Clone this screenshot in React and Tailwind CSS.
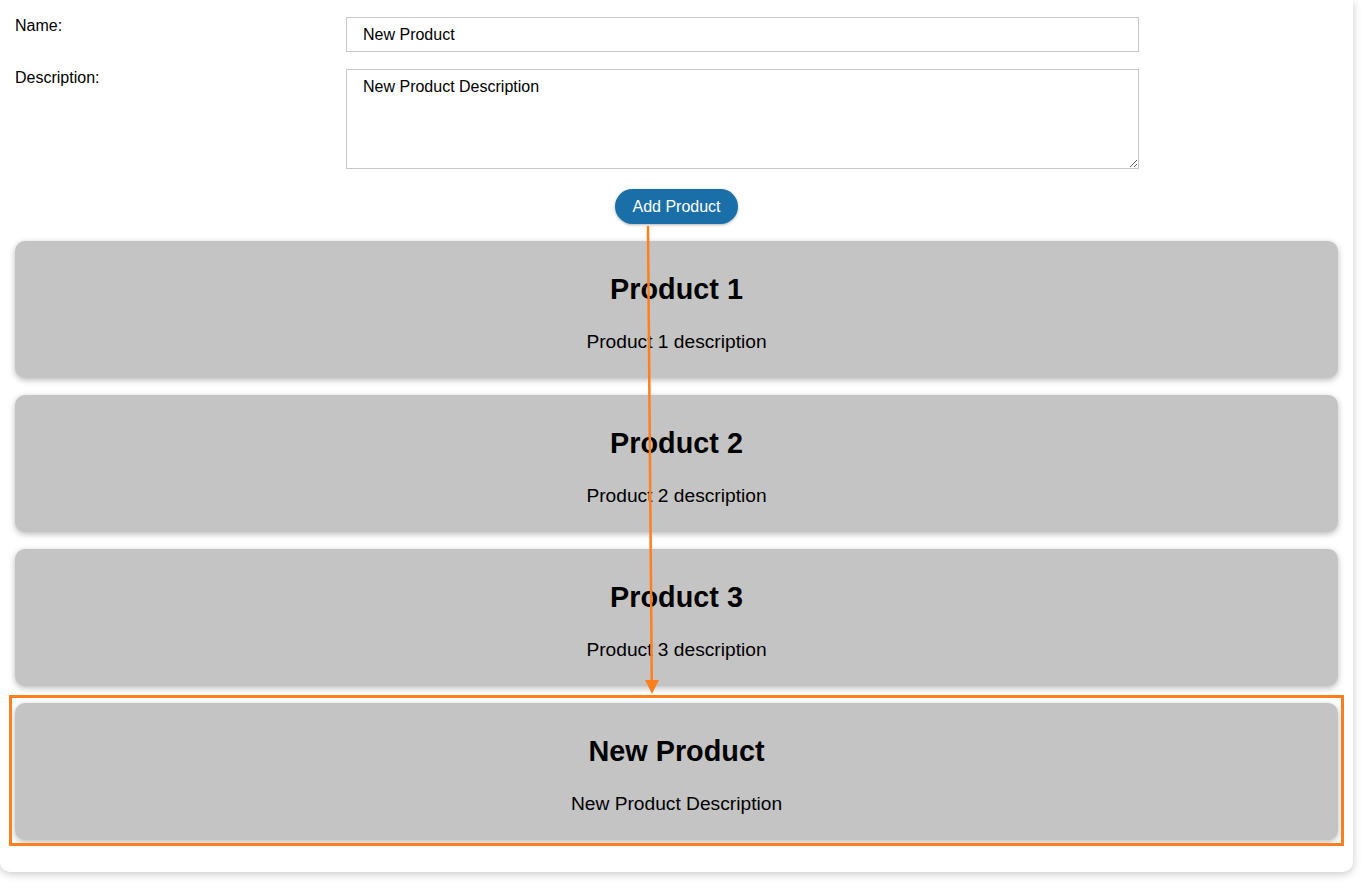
import React, { useState } from 'react';

const initialProducts = [
  { name: 'Product 1', description: 'Product 1 description' },
  { name: 'Product 2', description: 'Product 2 description' },
  { name: 'Product 3', description: 'Product 3 description' },
  { name: 'New Product', description: 'New Product Description' },
];

const ProductCard = ({ product }) => (
  <div className="bg-[#c4c4c4] rounded-[10px] shadow-[0_2px_6px_rgba(0,0,0,0.28)] text-center text-black pt-[32px] pb-[25px]">
    <h2 className="text-[28.8px] font-bold leading-[33px]">{product.name}</h2>
    <p className="text-[19.2px] leading-[22px] mt-[25px]">{product.description}</p>
  </div>
);

const App = () => {
  const [name, setName] = useState('New Product');
  const [description, setDescription] = useState('New Product Description');
  const [products] = useState(initialProducts);

  return (
    <div className="min-h-screen bg-white font-['Liberation_Sans',Arial,sans-serif] text-black">
      <div className="relative w-[1353px] bg-white rounded-b-[10px] shadow-[0_2px_8px_rgba(0,0,0,0.22)] px-[15px] pt-[17px] pb-[32px]">
        <div className="grid grid-cols-[331px_793px] gap-y-[17px] text-[16px]">
          <label className="leading-[18px]">Name:</label>
          <input
            value={name}
            onChange={(e) => setName(e.target.value)}
            className="h-[35px] border border-[#c8c8c8] px-[16px] text-[16px] outline-none"
          />
          <label className="leading-[18px]">Description:</label>
          <textarea
            value={description}
            onChange={(e) => setDescription(e.target.value)}
            className="h-[100px] border border-[#c8c8c8] px-[16px] pt-[8px] text-[16px] leading-[18px] outline-none"
          />
        </div>

        <div className="flex justify-center mt-[20px]">
          <button className="h-[35px] px-[17px] rounded-full bg-[#1a6fa8] text-white text-[16px] shadow-[0_1px_3px_rgba(0,0,0,0.3)]">
            Add Product
          </button>
        </div>

        <div className="flex flex-col gap-[17px] mt-[17px]">
          {products.map((p) => (
            <ProductCard key={p.name} product={p} />
          ))}
        </div>

        {/* annotation: highlight box + arrow */}
        <div className="absolute left-[9px] top-[695px] w-[1335px] h-[151px] border-[3px] border-[#ff7f1e] pointer-events-none" />
        <svg className="absolute left-0 top-0 pointer-events-none" width="1353" height="889">
          <line x1="648" y1="226" x2="651.8" y2="682" stroke="#ff7f1e" strokeWidth="2.5" />
          <polygon points="645,680 659,680 652,694" fill="#ff7f1e" />
        </svg>
      </div>
    </div>
  );
};

export default App;
